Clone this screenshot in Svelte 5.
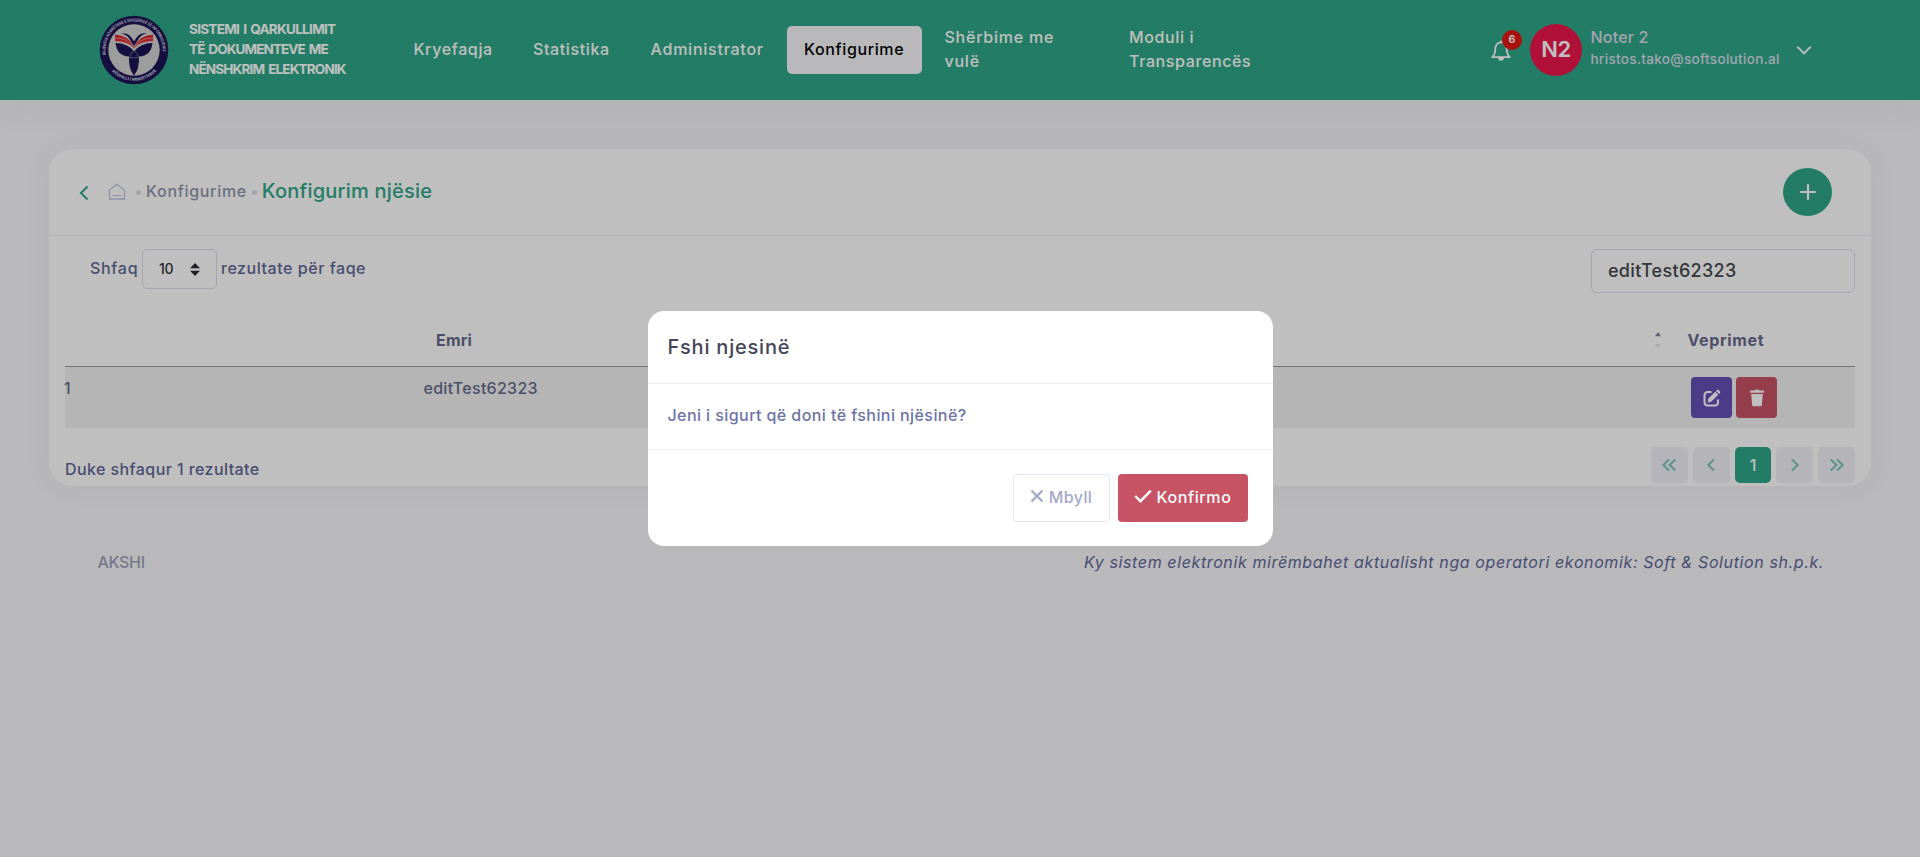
<script>
  const nav = [
    { label: 'Kryefaqja', width: 114 },
    { label: 'Statistika', width: 112 },
    { label: 'Administrator', width: 148, wide: true },
    { label: 'Konfigurime', width: 135, active: true },
    { label: 'Shërbime me vulë', width: 179, wide: true },
    { label: 'Moduli i Transparencës', width: 165 }
  ];
  const rows = [{ id: 1, name: 'editTest62323' }];
</script>

{#snippet chevrons(flip, double)}
  <svg class="chev" class:flip width="18" height="16" viewBox="0 0 18 16">
    {#if double}
      <path d="M9 2.5 3.3 8 9 13.5M15.3 2.5 9.6 8l5.7 5.5" />
    {:else}
      <path d="M12 2.5 6.3 8l5.7 5.5" />
    {/if}
  </svg>
{/snippet}

<div class="page">
  <header>
    <svg class="logo" width="70" height="70" viewBox="0 0 70 70">
      <circle cx="35" cy="35" r="34.3" fill="#1d1454" />
      <circle cx="35" cy="35" r="25.7" fill="#d2d2d2" />
      <defs>
        <path id="ring-top" d="M7 41A28.6 28.6 0 1 1 63 41" />
        <path id="ring-bottom" d="M11.500 55A31 31 0 0 0 58.500 55" />
      </defs>
      <text class="ring"><textPath href="#ring-top" startOffset="1" textLength="96" lengthAdjust="spacingAndGlyphs">AGJENCIA KOMBËTARE E SHOQËRISË SË INFORMACIONIT</textPath></text>
      <text class="ring"><textPath href="#ring-bottom" startOffset="2" textLength="50" lengthAdjust="spacingAndGlyphs">KËSHILLI I MINISTRAVE</textPath></text>
      <path d="M22 18.500q8-2 13 8 5-10 13-8-5.500.5-8.500 5.500L35 31l-4.500-7Q27.500 19 22 18.500z" fill="#1d1454" />
      <path d="M16 19.500q14 1 19 12.500 5-11.500 19-12.500v6.500q-14 0-19 7.500-5-7.500-19-7.500z" fill="#e3252d" />
      <path d="M16 23q14 0 19 10 5-10 19-10" fill="none" stroke="#d2d2d2" stroke-width=".6" />
      <path d="M16.500 28q12 0 18.500 8.500Q41.500 28 53.500 28 52 41 40 41.500 40.500 54 35 60.500 29.500 54 30 41.500 18 41 16.500 28z" fill="#1d1454" />
      <path d="M35 35q-4 4-4.500 7.500 4.500.7 9 0Q39 39 35 35z" fill="none" stroke="#b5b5bf" stroke-width=".5" />
    </svg>
    <div class="brand">
      <span class="b1">SISTEMI I QARKULLIMIT</span>
      <span class="b2">TË DOKUMENTEVE ME</span>
      <span class="b3">NËNSHKRIM ELEKTRONIK</span>
    </div>
    <nav>
      {#each nav as item}
        <a class:active={item.active} class:wide={item.wide} style="width:{item.width}px">{item.label}</a>
      {/each}
    </nav>
    <div class="user">
      <div class="bell">
        <svg width="20" height="24" viewBox="0 0 20 24" fill="none" stroke="#fff" stroke-width="1.7" stroke-linejoin="round">
          <path d="M10 2.600v1.500M1.200 19.200c2.200-2 3-4 3-7.200 0-4.800 2-7.600 5.800-7.600s5.800 2.800 5.800 7.600c0 3.200.8 5.200 3 7.200z" />
          <path d="M7.800 20.200c.4 2.400 4 2.400 4.400 0z" fill="#fff" />
        </svg>
        <span class="badge">6</span>
      </div>
      <div class="avatar">N2</div>
      <div class="who">
        <span class="name">Noter 2</span>
        <span class="mail">hristos.tako@softsolution.al</span>
      </div>
      <svg width="16" height="12" viewBox="0 0 16 12" fill="none" stroke="#fff" stroke-width="1.900" stroke-linecap="round"><path d="m1.800 3.200 6.200 6.300 6.200-6.300" /></svg>
    </div>
  </header>

  <main>
    <div class="card-head">
      <svg class="back" width="10" height="16" viewBox="0 0 10 16" fill="none" stroke="#2fa788" stroke-width="2"><path d="M8.500 1.500 2 8l6.500 6.500" /></svg>
      <svg class="home" width="18" height="18" viewBox="0 0 18 18" fill="none" stroke="#bfc3e0" stroke-width="1.300"><path d="M1.500 7 9 1.200 16.500 7v9h-15z" /><path d="M4.500 12.500h9" stroke-width="1" /></svg>
      <i class="dot"></i>
      <span class="crumb">Konfigurime</span>
      <i class="dot second"></i>
      <span class="title">Konfigurim njësie</span>
      <button class="add" aria-label="+"><svg width="18" height="18" viewBox="0 0 18 18" stroke="#fff" stroke-width="2.200" stroke-linecap="round"><path d="M9 2v14M2 9h14" /></svg></button>
    </div>

    <div class="tools">
      <span class="shfaq">Shfaq</span>
      <div class="select"><span>10</span><svg width="10" height="13" viewBox="0 0 10 13" fill="#2b2b33"><path d="M0 5.300 5 0l5 5.300zM0 7.700h10L5 13z" /></svg></div>
      <span class="rez">rezultate për faqe</span>
      <div class="search">editTest62323</div>
    </div>

    <div class="table">
      <div class="thead">
        <span></span>
        <span class="emri">Emri</span>
        <svg class="sort" width="8" height="18" viewBox="0 0 8 18"><path d="M1 5.300 4 1l3 4.300z" fill="#8084a0" /><path d="M1 13h6l-3 4z" fill="#e2e2e6" /></svg>
        <span class="vep">Veprimet</span>
      </div>
      {#each rows as row}
        <div class="row">
          <span class="num">{row.id}</span>
          <span class="cell">{row.name}</span>
          <div class="actions">
            <button class="edit" aria-label="edit"><svg width="18" height="18" viewBox="0 0 18 18"><path d="M8.500 3H4.500A3 3 0 0 0 1.500 6v7.500a3 3 0 0 0 3 3H12a3 3 0 0 0 3-3V10.500" fill="none" stroke="#fff" stroke-width="2" /><path d="m5.200 9.800 7-7 3 3-7 7-3.600.8zM13 2l1-1c1.200-1 4 1.500 3 3l-1 1z" fill="#fff" /></svg></button>
            <button class="trash" aria-label="trash"><svg width="16" height="18" viewBox="0 0 16 18" fill="#fff"><path d="M1.200 1.500h4L6 .700h4l.8.800h4v2.200H1.200zM2.200 5h11.600l-.9 10.700c-.1 1-.7 1.600-1.700 1.600H4.800c-1 0-1.600-.6-1.700-1.600z" /></svg></button>
          </div>
        </div>
      {/each}
    </div>

    <div class="foot-row">
      <span class="duke">Duke shfaqur 1 rezultate</span>
      <div class="pager">
        <button>{@render chevrons(false, true)}</button>
        <button>{@render chevrons(false, false)}</button>
        <button class="on">1</button>
        <button>{@render chevrons(true, false)}</button>
        <button>{@render chevrons(true, true)}</button>
      </div>
    </div>
  </main>

  <footer>
    <span class="akshi">AKSHI</span>
    <em>Ky sistem elektronik mirëmbahet aktualisht nga operatori ekonomik: Soft &amp; Solution sh.p.k.</em>
  </footer>
</div>

<div class="overlay">
  <div class="modal">
    <div class="m-title">Fshi njesinë</div>
    <div class="m-body">Jeni i sigurt që doni të fshini njësinë?</div>
    <div class="m-foot">
      <button class="close"><svg width="14" height="14" viewBox="0 0 14 14" fill="none" stroke="#a4a8c6" stroke-width="2.300"><path d="m1.500 1.500 11 11m0-11-11 11" /></svg><span>Mbyll</span></button>
      <button class="confirm"><svg width="18" height="14" viewBox="0 0 18 14" fill="none" stroke="#fff" stroke-width="2.400"><path d="m1.200 7 5.300 5.200L16.800 1.700" /></svg><span>Konfirmo</span></button>
    </div>
  </div>
</div>

<style>
  :global(body) { background: #f7f7fa; overflow: hidden; }
  .page, .overlay { font: 450 16px/24px Inter, "Open Sans", sans-serif; color: #5f6796; letter-spacing: .55px; white-space: nowrap; }
  .page { height: 857px; }
  button { border: 0; padding: 0; font: inherit; letter-spacing: inherit; display: flex; align-items: center; justify-content: center; box-sizing: border-box; }
  svg { flex: none; display: block; }

  header { height: 100px; box-sizing: border-box; padding-left: 99px; background: #2fa788; display: flex; align-items: center; color: #fff; box-shadow: 0 10px 30px rgba(70, 65, 90, .05); }
  .ring { font: 700 4.200px Inter, sans-serif; fill: #d4d4e2; letter-spacing: 0; }
  .brand { width: 207px; padding-left: 20px; box-sizing: border-box; display: flex; flex-direction: column; font-weight: 700; font-size: 13.500px; line-height: 20px; margin-top: -2px; word-spacing: 1.500px; }
  .b1 { letter-spacing: -.7px; }
  .b2 { letter-spacing: -.88px; }
  .b3 { letter-spacing: -.82px; }
  nav { margin: 0 0 0 20px; width: 1083.500px; display: flex; align-items: center; gap: 5.500px; font-weight: 500; }
  nav a { box-sizing: border-box; padding: 11px 17.500px 13px; letter-spacing: .62px; }
  nav a.wide { letter-spacing: .76px; }
  nav a:nth-child(n + 5) { white-space: normal; padding-right: 40px; }
  nav a:last-child { padding-right: 20px; }
  nav a.active { background: #f7f7fb; color: #000; border-radius: 5px; }
  .user { display: flex; align-items: center; margin-left: 11.500px; }
  .bell { position: relative; width: 39px; height: 24px; }
  .badge { position: absolute; left: 11px; top: -8px; width: 20px; height: 20px; border-radius: 50%; background: #e11a14; font: 700 10.500px/20px Inter, sans-serif; letter-spacing: 0; text-align: center; }
  .avatar { width: 52px; height: 52px; border-radius: 50%; background: #ed174c; font: 600 22px/50px Inter, sans-serif; letter-spacing: -.4px; text-align: center; }
  .who { margin: -5px 0 0 8.500px; width: 205px; display: flex; flex-direction: column; color: #dcdcea; font-weight: 500; }
  .name { letter-spacing: .2px; line-height: 23px; }
  .mail { font-size: 13.500px; letter-spacing: .33px; line-height: 21px; }

  main { margin: 49px 49px 0; height: 337px; border-radius: 24px; background: #fff; box-shadow: 0 0 30px rgba(70, 65, 90, .05); box-sizing: border-box; }
  .card-head { height: 87px; box-sizing: border-box; border-bottom: 1px solid #ebedf3; display: flex; align-items: center; padding: 0 39px 1px 30px; }
  .back { margin-top: 3px; }
  .home { margin: 0 0 0 19px; }
  .dot { width: 5px; height: 5px; border-radius: 50%; background: #dcdce4; margin: 2px 5px 0 10px; }
  .second { margin: 2px 5px 0 5px; }
  .crumb { letter-spacing: .68px; color: #9194ae; margin-top: -1px; }
  .title { font-size: 20px; font-weight: 450; letter-spacing: .22px; color: #2fa788; margin-top: -1px; }
  .add { margin-left: auto; width: 49px; height: 48px; border-radius: 50%; background: #2fa788; }
  .tools { display: flex; padding: 13px 16px 0 41px; height: 57px; box-sizing: border-box; line-height: 39px; }
  .shfaq { width: 52px; letter-spacing: .7px; }
  .select { width: 75px; height: 40px; box-sizing: border-box; border: 1px solid #dcdeec; border-radius: 5px; display: flex; align-items: center; justify-content: space-between; padding: 0 16px 0 16px; margin-right: 4px; color: #33333d; font-size: 14px; letter-spacing: -.3px; }
  .select span { margin-top: -2px; }
  .rez { letter-spacing: .54px; }
  .search { margin-left: auto; width: 264px; height: 44px; line-height: 42px; box-sizing: border-box; border: 1px solid #dcdeec; border-radius: 6px; padding-left: 16px; font-size: 18px; letter-spacing: .3px; color: #46484f; }
  .table { margin: 23px 16px 0; }
  .thead { height: 51px; border-bottom: 1px solid #9b9b9e; box-sizing: border-box; display: grid; grid-template-columns: 371px 1217.500px 34px 1fr; line-height: 48px; font-weight: 700; color: #656a8c; }
  .emri { letter-spacing: .2px; }
  .sort { margin-top: 15px; }
  .vep { letter-spacing: .64px; }
  .row { height: 61px; background: #f2f2f2; display: grid; grid-template-columns: 358.500px 1267.500px 1fr; line-height: 42px; color: #656a8c; }
  .num { margin-left: -1px; }
  .cell { letter-spacing: .28px; }
  .actions { display: flex; gap: 4px; padding-top: 10px; }
  .actions button { width: 41px; height: 41px; border-radius: 4px; }
  .edit { background: #6451b8; }
  .trash { background: #c85365; }
  .foot-row { display: flex; justify-content: space-between; padding: 19px 16px 0; }
  .duke { line-height: 44px; letter-spacing: .42px; }
  .pager { display: flex; gap: 5px; }
  .pager button { width: 36.800px; height: 36px; border-radius: 5px; background: #f0f0f7; }
  .pager .on { background: #2fa788; color: #fff; font-weight: 500; letter-spacing: 0; }
  .chev { fill: none; stroke: #80c5b4; stroke-width: 2; }
  .flip { transform: scaleX(-1); }

  footer { display: flex; justify-content: space-between; padding: 64px 96px 0 97.500px; }
  .akshi { letter-spacing: -.3px; color: #9ea0b8; }
  em { letter-spacing: .61px; }

  .overlay { position: fixed; inset: 0; background: rgba(0, 0, 0, .25); display: flex; justify-content: center; align-items: center; }
  .modal { width: 625px; height: 235px; background: #fff; border-radius: 16px; }
  .m-title { height: 73px; box-sizing: border-box; border-bottom: 1px solid #ebedf3; padding-left: 20px; font-size: 20px; font-weight: 450; line-height: 72px; letter-spacing: .78px; color: #464457; }
  .m-body { height: 66px; box-sizing: border-box; border-bottom: 1px solid #ebedf3; padding-left: 20px; line-height: 63px; letter-spacing: .42px; color: #6c73a6; }
  .m-foot { display: flex; justify-content: flex-end; gap: 8px; padding: 24px 25px 0 0; font-weight: 500; }
  .m-foot button { height: 48px; border-radius: 4px; gap: 5px; }
  .m-foot svg { margin-top: -4px; }
  .m-foot span { margin-top: -2px; }
  .close { width: 97px; background: #fff; border: 1px solid #e4e6f8; color: #a4a8c6; letter-spacing: .4px; }
  .confirm { width: 130px; background: #c85365; color: #fff; letter-spacing: .6px; }
</style>
